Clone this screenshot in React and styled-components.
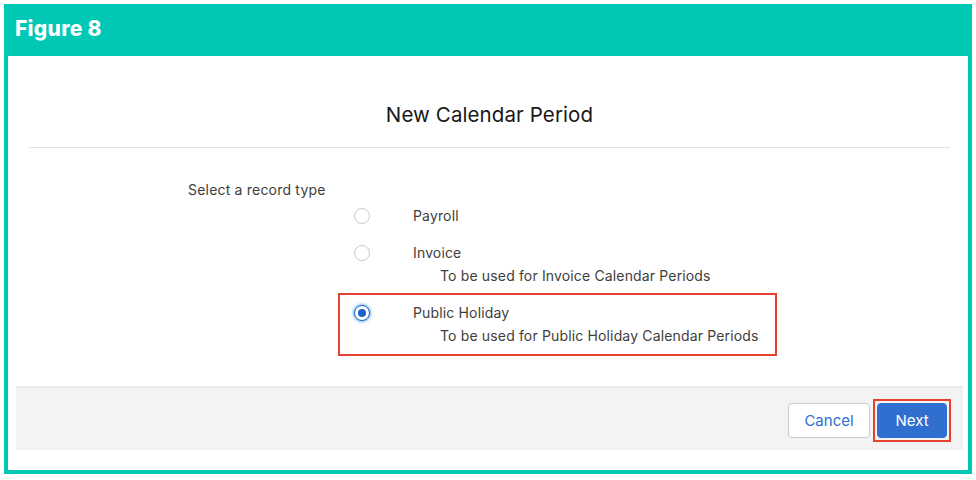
import styled, { createGlobalStyle } from 'styled-components'

const GlobalStyle = createGlobalStyle`
  body {
    margin: 0;
    background: #ffffff;
    font-family: Inter, "Liberation Sans", Arial, sans-serif;
  }
`

const options = [
  { id: 'payroll', label: 'Payroll' },
  { id: 'invoice', label: 'Invoice', desc: 'To be used for Invoice Calendar Periods' },
  { id: 'holiday', label: 'Public Holiday', desc: 'To be used for Public Holiday Calendar Periods', selected: true },
]

const App = () => {
  return (
    <>
      <GlobalStyle />
      <Frame>
        <FigureBar>Figure 8</FigureBar>
        <Canvas>
          <Modal>
            <ModalHeader>
              <Title>New Calendar Period</Title>
            </ModalHeader>
            <ModalBody>
              <FieldLabel>Select a record type</FieldLabel>
              <OptionList>
                {options.map((o) => (
                  <Option key={o.id} $selected={o.selected}>
                    <Radio $checked={o.selected} />
                    <OptionText>
                      <OptionLabel>{o.label}</OptionLabel>
                      {o.desc && <OptionDesc>{o.desc}</OptionDesc>}
                    </OptionText>
                  </Option>
                ))}
              </OptionList>
            </ModalBody>
            <ModalFooter>
              <Button>Cancel</Button>
              <Highlight>
                <Button $primary>Next</Button>
              </Highlight>
            </ModalFooter>
          </Modal>
        </Canvas>
      </Frame>
    </>
  )
}

export default App

const Frame = styled.div`
  margin: 4px;
  width: 968px;
  height: 470px;
  box-sizing: border-box;
  display: flex;
  flex-direction: column;
  background: #00c8b4;
`

const FigureBar = styled.div`
  height: 52px;
  padding: 0 0 4px 11px;
  box-sizing: border-box;
  display: flex;
  align-items: center;
  color: #ffffff;
  font-family: Inter, "Open Sans", sans-serif;
  font-weight: 800;
  font-size: 21px;
  letter-spacing: 0.3px;
`

const Canvas = styled.div`
  flex: 1;
  margin: 0 4px 4px;
  background: #ffffff;
  padding: 16px 5px 20px 8px;
`

const Modal = styled.div`
  background: #ffffff;
  display: flex;
  flex-direction: column;
  height: 100%;
`

const ModalHeader = styled.div`
  margin: 0 13px;
  padding: 29px 0 18px;
  border-bottom: 1px solid #e4e4e4;
  text-align: center;
`

const Title = styled.h2`
  margin: 0;
  font-size: 20.5px;
  line-height: 28px;
  font-weight: 400;
  letter-spacing: 0.1px;
  color: #181818;
`

const ModalBody = styled.div`
  flex: 1;
  padding: 32px 0 0 172px;
`

const FieldLabel = styled.div`
  font-size: 14px;
  line-height: 20px;
  letter-spacing: 0.2px;
  color: #3e3e3c;
`

const OptionList = styled.div`
  margin: -4px 0 0 150px;
  display: flex;
  flex-direction: column;
  align-items: flex-start;
`

const Option = styled.div`
  display: flex;
  align-items: flex-start;
  padding: 8px 16px 8px 14px;
  border: 2px solid ${(p) => (p.$selected ? '#e5412d' : 'transparent')};
  & + & {
    margin-top: -3px;
  }
`

const Radio = styled.span`
  width: 16px;
  height: 16px;
  margin-top: 2px;
  box-sizing: border-box;
  border-radius: 50%;
  background: #ffffff;
  border: 1px solid ${(p) => (p.$checked ? '#1b63c6' : '#c9c9c9')};
  box-shadow: ${(p) => (p.$checked ? '0 0 3px 1px rgba(1, 118, 211, 0.55)' : 'none')};
  display: flex;
  align-items: center;
  justify-content: center;
  &::after {
    content: '';
    width: 8px;
    height: 8px;
    border-radius: 50%;
    background: #1b63c6;
    display: ${(p) => (p.$checked ? 'block' : 'none')};
  }
`

const OptionText = styled.div`
  margin-left: 43px;
`

const OptionLabel = styled.div`
  font-size: 14px;
  line-height: 20px;
  letter-spacing: 0.15px;
  color: #3e3e3c;
`

const OptionDesc = styled.div`
  margin: 3px 0 0 27px;
  font-size: 14px;
  line-height: 20px;
  letter-spacing: 0.15px;
  color: #3e3e3c;
`

const ModalFooter = styled.div`
  height: 64px;
  box-sizing: border-box;
  background: #f3f3f3;
  border-top: 2px solid #e9e9e9;
  display: flex;
  justify-content: flex-end;
  align-items: center;
  gap: 3px;
  padding: 2px 12px 0 0;
`

const Highlight = styled.span`
  display: flex;
  padding: 2px;
  border: 2px solid #e5412d;
`

const Button = styled.button`
  height: 35px;
  width: ${(p) => (p.$primary ? '70px' : '82px')};
  padding: 0;
  border-radius: 4px;
  border: 1px solid ${(p) => (p.$primary ? '#2f6fcf' : '#c9c9c9')};
  background: ${(p) => (p.$primary ? '#2f6fcf' : '#ffffff')};
  color: ${(p) => (p.$primary ? '#ffffff' : '#2e6fce')};
  font-family: Inter, "Liberation Sans", sans-serif;
  font-size: 15px;
  cursor: pointer;
`
